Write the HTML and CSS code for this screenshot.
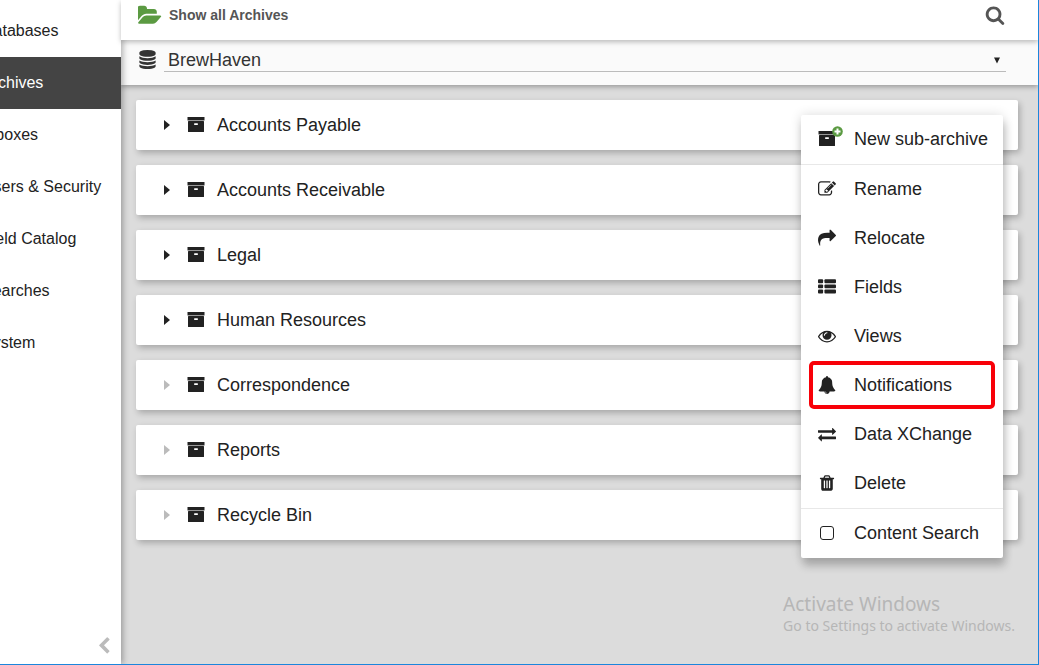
FILE: index.html
```html
<!DOCTYPE html>
<html lang="en">
<head>
<meta charset="utf-8">
<title>Archives</title>
<link rel="stylesheet" href="styles.css">
</head>
<body>
<svg class="defs" aria-hidden="true">
  <symbol id="archive" viewBox="0 0 18 18"><rect x="0.5" y="1" width="17" height="3"/><rect x="0.5" y="4" width="17" height="1" fill="#999"/><rect x="1" y="5" width="16" height="11" rx="0.5"/><rect x="7" y="7.300" width="4" height="1.700" rx="0.8" fill="#fff"/></symbol>
  <symbol id="caret" viewBox="0 0 6 10"><path d="M0 0L6 5L0 10z"/></symbol>
</svg>
<div class="app">
  <nav class="sidebar">
    <ul class="nav-list">
      <li><a class="nav-link" href="#">Databases</a></li>
      <li><a class="nav-link active" href="#">Archives</a></li>
      <li><a class="nav-link" href="#">Inboxes</a></li>
      <li><a class="nav-link" href="#">Users &amp; Security</a></li>
      <li><a class="nav-link" href="#">Field Catalog</a></li>
      <li><a class="nav-link" href="#">Searches</a></li>
      <li><a class="nav-link" href="#">System</a></li>
    </ul>
    <button class="collapse" type="button" aria-label="Collapse sidebar"><svg class="icon" viewBox="0 0 1792 1792"><path d="M1427 301l-531 531 531 531q19 19 19 45t-19 45l-166 166q-19 19-45 19t-45-19l-742-742q-19-19-19-45t19-45l742-742q19-19 45-19t45 19l166 166q19 19 19 45t-19 45z"/></svg></button>
  </nav>
  <main class="main">
    <header class="toolbar">
      <button class="show-all" type="button">
        <svg class="folder" viewBox="0 0 1879 1792"><path d="M1815 952q0 31-31 66l-336 396q-43 51-120.5 86.5t-143.5 35.5h-1088q-34 0-60.5-13t-26.5-43q0-31 31-66l336-396q43-51 120.5-86.5t143.5-35.5h1088q34 0 60.5 13t26.5 43zm-343-344v160h-832q-94 0-197 47.5t-164 119.5l-337 396-5 6q0-4-.5-12.5t-.5-12.5v-960q0-92 66-158t158-66h320q92 0 158 66t66 158v32h544q92 0 158 66t66 158z"/></svg>
        Show all Archives
      </button>
      <button class="search" type="button" aria-label="Search"><svg class="icon-large" viewBox="0 0 1792 1792"><path d="M1216 832q0-185-131.5-316.5t-316.5-131.5-316.5 131.5-131.5 316.5 131.5 316.5 316.5 131.5 316.5-131.5 131.5-316.5zm512 832q0 52-38 90t-90 38q-54 0-90-38l-343-342q-179 124-399 124-143 0-273.5-55.5t-225-150-150-225-55.5-273.5 55.5-273.5 150-225 225-150 273.5-55.5 273.5 55.5 225 150 150 225 55.5 273.5q0 220-124 399l343 343q37 37 37 90z"/></svg></button>
    </header>
    <div class="database-bar">
      <svg class="database" viewBox="0 0 1792 1792" aria-hidden="true"><path d="M896 768q237 0 443-43t325-127v170q0 69-103 128t-280 93.500-385 34.500-385-34.500-280-93.500-103-128v-170q119 84 325 127t443 43zm0 768q237 0 443-43t325-127v170q0 69-103 128t-280 93.500-385 34.500-385-34.500-280-93.500-103-128v-170q119 84 325 127t443 43zm0-384q237 0 443-43t325-127v170q0 69-103 128t-280 93.500-385 34.500-385-34.500-280-93.500-103-128v-170q119 84 325 127t443 43zm0-1152q208 0 385 34.500t280 93.500 103 128v128q0 69-103 128t-280 93.500-385 34.500-385-34.500-280-93.500-103-128v-128q0-69 103-128t280-93.500 385-34.500z"/></svg>
      <div class="select-wrap">
        <select class="select" aria-label="Database"><option>BrewHaven</option></select>
        <svg class="select-arrow" viewBox="0 0 6 7" aria-hidden="true"><path d="M0 0.5h6L3 6.500z"/></svg>
      </div>
    </div>
    <ul class="archives">
      <li class="card"><button class="toggle" type="button" aria-label="Expand Accounts Payable"><svg class="caret"><use href="#caret"/></svg></button><svg class="icon"><use href="#archive"/></svg><span>Accounts Payable</span></li>
      <li class="card"><button class="toggle" type="button" aria-label="Expand Accounts Receivable"><svg class="caret"><use href="#caret"/></svg></button><svg class="icon"><use href="#archive"/></svg><span>Accounts Receivable</span></li>
      <li class="card"><button class="toggle" type="button" aria-label="Expand Legal"><svg class="caret"><use href="#caret"/></svg></button><svg class="icon"><use href="#archive"/></svg><span>Legal</span></li>
      <li class="card"><button class="toggle" type="button" aria-label="Expand Human Resources"><svg class="caret"><use href="#caret"/></svg></button><svg class="icon"><use href="#archive"/></svg><span>Human Resources</span></li>
      <li class="card"><button class="toggle" type="button" disabled aria-label="Expand Correspondence"><svg class="caret"><use href="#caret"/></svg></button><svg class="icon"><use href="#archive"/></svg><span>Correspondence</span></li>
      <li class="card"><button class="toggle" type="button" disabled aria-label="Expand Reports"><svg class="caret"><use href="#caret"/></svg></button><svg class="icon"><use href="#archive"/></svg><span>Reports</span></li>
      <li class="card"><button class="toggle" type="button" disabled aria-label="Expand Recycle Bin"><svg class="caret"><use href="#caret"/></svg></button><svg class="icon"><use href="#archive"/></svg><span>Recycle Bin</span></li>
    </ul>
    <div class="menu">
      <button class="menu-item" type="button"><span class="menu-icon"><svg class="icon"><use href="#archive"/></svg><svg class="badge" viewBox="0 0 11 11"><circle cx="5.500" cy="5.500" r="5.300"/><path d="M5.500 2.500v6M2.500 5.500h6"/></svg></span>New sub-archive</button>
      <hr class="divider">
      <button class="menu-item" type="button"><span class="menu-icon"><svg class="icon" viewBox="0 0 1792 1792"><path d="M888 1184l116-116-152-152-116 116v56h96v96h56zm440-720q-16-16-33 1l-350 350q-17 17-1 33t33-1l350-350q17-17 1-33zm80 594v190q0 119-84.500 203.500t-203.500 84.500h-832q-119 0-203.500-84.500t-84.500-203.500v-832q0-119 84.500-203.500t203.500-84.500h832q63 0 117 25 15 7 18 23 3 17-9 29l-49 49q-14 14-32 8-23-6-45-6h-832q-66 0-113 47t-47 113v832q0 66 47 113t113 47h832q66 0 113-47t47-113v-126q0-13 9-22l64-64q15-15 35-7t20 29zm-96-738l288 288-672 672h-288v-288zm444 132l-92 92-288-288 92-92q28-28 68-28t68 28l152 152q28 28 28 68t-28 68z"/></svg></span>Rename</button>
      <button class="menu-item" type="button"><span class="menu-icon"><svg class="icon" viewBox="0 0 1792 1792"><path d="M1792 640q0 26-19 45l-512 512q-19 19-45 19t-45-19-19-45v-256h-224q-98 0-175.500 6t-154 21.500-133 42.500-105.500 69.500-80 101-48.500 138.500-17.500 181q0 55 5 123 0 6 2.500 23.500t2.500 26.500q0 15-8.500 25t-23.500 10q-16 0-28-17-7-9-13-22t-13.500-30-10.500-24q-127-285-127-451 0-199 53-333 162-403 875-403h224v-256q0-26 19-45t45-19 45 19l512 512q19 19 19 45z"/></svg></span>Relocate</button>
      <button class="menu-item" type="button"><span class="menu-icon"><svg class="icon" viewBox="0 0 1792 1792"><rect y="128" width="512" height="384" rx="96"/><rect y="640" width="512" height="384" rx="96"/><rect y="1152" width="512" height="384" rx="96"/><rect x="640" y="128" width="1152" height="384" rx="96"/><rect x="640" y="640" width="1152" height="384" rx="96"/><rect x="640" y="1152" width="1152" height="384" rx="96"/></svg></span>Fields</button>
      <button class="menu-item" type="button"><span class="menu-icon"><svg class="icon" viewBox="0 0 1792 1792"><path d="M1664 960q-152-236-381-353 61 104 61 225 0 185-131.500 316.500t-316.500 131.500-316.500-131.500-131.500-316.500q0-121 61-225-229 117-381 353 133 205 333.500 326.500t434.500 121.500 434.500-121.500 333.500-326.500zm-720-384q0-20-14-34t-34-14q-125 0-214.500 89.500t-89.500 214.500q0 20 14 34t34 14 34-14 14-34q0-86 61-147t147-61q20 0 34-14t14-34zm848 384q0 34-20 69-140 230-376.500 368.500t-499.500 138.500-499.500-139-376.500-368q-20-35-20-69t20-69q140-229 376.500-368t499.500-139 499.500 139 376.500 368q20 35 20 69z"/></svg></span>Views</button>
      <button class="menu-item highlighted" type="button"><span class="menu-icon"><svg class="icon" viewBox="0 0 1792 1792"><path d="M912 1696q0-16-16-16-59 0-101.500-42.500t-42.500-101.500q0-16-16-16t-16 16q0 73 51.500 124.500t124.500 51.500q16 0 16-16zm816-288q0 52-38 90t-90 38h-448q0 106-75 181t-181 75-181-75-75-181h-448q-52 0-90-38t-38-90q50-42 91-88t85-119.500 74.500-158.500 50-206 19.500-260q0-152 117-282.500t307-158.500q-8-19-8-39 0-40 28-68t68-28 68 28 28 68q0 20-8 39 190 28 307 158.500t117 282.500q0 139 19.500 260t50 206 74.500 158.500 85 119.500 91 88z"/></svg></span>Notifications</button>
      <button class="menu-item" type="button"><span class="menu-icon"><svg class="icon" viewBox="0 0 1792 1792"><path d="M1792 1184v192q0 13-9.500 22.500t-22.500 9.500h-1376v192q0 13-9.500 22.500t-22.500 9.500q-12 0-24-10l-319-320q-9-9-9-22 0-14 9-23l320-320q9-9 23-9 13 0 22.500 9.500t9.500 22.500v192h1376q13 0 22.500 9.500t9.500 22.500zm0-544q0 14-9 23l-320 320q-9 9-23 9-13 0-22.500-9.500t-9.500-22.500v-192h-1376q-13 0-22.500-9.500t-9.500-22.500v-192q0-13 9.500-22.500t22.500-9.500h1376v-192q0-14 9-23t23-9q12 0 24 10l319 319q9 9 9 23z"/></svg></span>Data XChange</button>
      <button class="menu-item" type="button"><span class="menu-icon"><svg class="icon" viewBox="0 0 1792 1792"><path d="M704 1376v-704q0-14-9-23t-23-9h-64q-14 0-23 9t-9 23v704q0 14 9 23t23 9h64q14 0 23-9t9-23zm256 0v-704q0-14-9-23t-23-9h-64q-14 0-23 9t-9 23v704q0 14 9 23t23 9h64q14 0 23-9t9-23zm256 0v-704q0-14-9-23t-23-9h-64q-14 0-23 9t-9 23v704q0 14 9 23t23 9h64q14 0 23-9t9-23zm-544-992h448l-48-117q-7-9-17-11h-317q-10 2-17 11zm928 32v64q0 14-9 23t-23 9h-96v948q0 83-47 143.500t-113 60.500h-832q-66 0-113-58.500t-47-141.500v-952h-96q-14 0-23-9t-9-23v-64q0-14 9-23t23-9h309l70-167q15-37 54-63t79-26h320q40 0 79 26t54 63l70 167h309q14 0 23 9t9 23z"/></svg></span>Delete</button>
      <hr class="divider">
      <label class="menu-item"><span class="menu-icon"><input class="check" type="checkbox"></span>Content Search</label>
    </div>
    <div class="watermark">
      <p class="watermark-title">Activate Windows</p>
      <p class="watermark-text">Go to Settings to activate Windows.</p>
    </div>
  </main>
</div>
</body>
</html>
```
FILE: styles.css
```css
* { box-sizing: border-box; }
body {
  margin: 0;
  font-family: "Liberation Sans", Arial, sans-serif;
  font-size: 18px;
  color: #222;
}
button {
  padding: 0;
  border: 0;
  background: none;
  color: inherit;
  font: inherit;
}
ul { margin: 0; padding: 0; list-style: none; }
svg { display: block; flex: none; fill: currentColor; }
.defs { position: absolute; width: 0; height: 0; }
.icon { width: 18px; height: 18px; }
.icon-large { width: 20px; height: 20px; }

.app {
  display: flex;
  min-height: 100vh;
  border-right: 1px solid #1b86dc;
  border-bottom: 1px solid #1b86dc;
  overflow: hidden;
}
.sidebar {
  z-index: 1;
  display: flex;
  flex-direction: column;
  justify-content: space-between;
  width: 121px;
  flex: none;
  padding: 5px 0 9px;
  background: #fff;
  box-shadow: 2px 0 6px rgba(0, 0, 0, 0.3);
}
.nav-list { margin-left: -18px; }
.nav-link {
  display: block;
  font-size: 16px;
  line-height: 52px;
  white-space: nowrap;
  color: #222;
  text-decoration: none;
}
.nav-link.active { background: #444; color: #fff; }
.collapse { align-self: flex-end; margin-right: 8px; color: #bbb; }

.main {
  position: relative;
  display: flex;
  flex-direction: column;
  flex: 1;
  min-width: 0;
  background: #dcdcdc;
}
.toolbar {
  position: relative;
  z-index: 1;
  display: flex;
  align-items: center;
  justify-content: space-between;
  height: 40px;
  padding: 0 33px 10px 17px;
  background: #fff;
  box-shadow: 0 2px 5px rgba(0, 0, 0, 0.26);
}
.show-all {
  display: flex;
  align-items: center;
  gap: 7px;
  font-size: 14px;
  font-weight: bold;
  color: #555;
}
.folder { width: 24px; height: 23px; color: #5b9a42; }
.search { color: #555; }
.database-bar {
  display: flex;
  align-items: center;
  gap: 7px;
  height: 45px;
  padding: 0 32px 6px 17px;
  background: #fafafa;
  box-shadow: 0 2px 5px rgba(0, 0, 0, 0.3);
}
.database { width: 19px; height: 19px; color: #333; }
.select-wrap { position: relative; flex: 1; }
.select {
  display: block;
  width: 100%;
  height: 25px;
  padding: 1px 4px 0;
  border: 0;
  border-bottom: 1px solid #bbb;
  border-radius: 0;
  background: transparent;
  appearance: none;
  font: inherit;
  color: #333;
}
.select-arrow {
  position: absolute;
  top: 10px;
  right: 6px;
  width: 6px;
  height: 7px;
  color: #222;
  pointer-events: none;
}
.archives {
  display: grid;
  gap: 15px;
  padding: 15px 20px 15px 15px;
}
.card {
  display: flex;
  align-items: center;
  height: 50px;
  padding: 0 28px;
  border-radius: 2px;
  background: #fff;
  box-shadow: 2px 3px 6px rgba(0, 0, 0, 0.24);
}
.card .icon { margin: 0 12px 0 17px; }
.caret { width: 6px; height: 10px; }
.toggle:disabled { color: #bbb; }

.menu {
  position: absolute;
  z-index: 2;
  top: 115px;
  right: 35px;
  border-radius: 2px;
  background: #fff;
  box-shadow: 2px 8px 8px rgba(0, 0, 0, 0.2), 0 0 12px rgba(0, 0, 0, 0.14);
}
.menu-item {
  position: relative;
  display: flex;
  align-items: center;
  gap: 16px;
  width: 100%;
  height: 49px;
  padding: 0 15px;
  white-space: nowrap;
}
.menu-icon {
  position: relative;
  display: flex;
  justify-content: center;
  width: 22px;
  padding-bottom: 2px;
}
.divider { margin: 0; border: 0; border-top: 1px solid #e8e8e8; }
.badge {
  position: absolute;
  top: -4px;
  right: -5px;
  width: 11px;
  height: 11px;
  fill: #5b9a42;
  stroke: #fff;
  stroke-width: 2;
}
.badge circle { stroke: none; }
.highlighted::after {
  content: "";
  position: absolute;
  inset: 0 8px 1px;
  border: 4px solid #f80008;
  border-radius: 5px;
}
.check {
  width: 14px;
  height: 14px;
  margin: 0;
  border: 1px solid #222;
  border-radius: 3px;
  appearance: none;
}
.check:checked { background: #222; }

.watermark {
  position: absolute;
  right: 23px;
  bottom: 28px;
  font-family: "Noto Sans", "Open Sans", sans-serif;
  color: #b6b6b6;
}
.watermark p { margin: 0; }
.watermark-title { font-size: 19px; line-height: 24px; }
.watermark-text { font-size: 14px; line-height: 20px; }
```
